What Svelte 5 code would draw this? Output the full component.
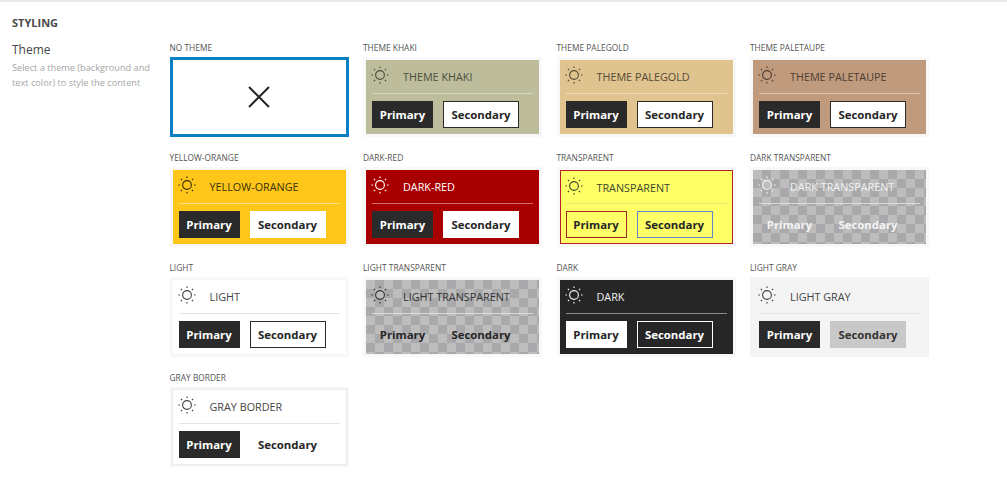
<script>
  const themes = [
    { label: 'THEME KHAKI', cls: 'khaki' },
    { label: 'THEME PALEGOLD', cls: 'palegold' },
    { label: 'THEME PALETAUPE', cls: 'paletaupe' },
    { label: 'YELLOW-ORANGE', cls: 'yellow-orange' },
    { label: 'DARK-RED', cls: 'dark-red' },
    { label: 'TRANSPARENT', cls: 'transparent' },
    { label: 'DARK TRANSPARENT', cls: 'dark-transparent' },
    { label: 'LIGHT', cls: 'light' },
    { label: 'LIGHT TRANSPARENT', cls: 'light-transparent' },
    { label: 'DARK', cls: 'dark' },
    { label: 'LIGHT GRAY', cls: 'light-gray' },
    { label: 'GRAY BORDER', cls: 'gray-border' }
  ];
  const rays = [0, 45, 90, 135, 180, 225, 270, 315];
</script>

<section class="styling">
  <h2>STYLING</h2>
  <div class="field">
    <div class="intro">
      <h3>Theme</h3>
      <p>Select a theme (background and text color) to style the content</p>
    </div>
    <div class="grid">
      <div class="option">
        <span class="label">NO THEME</span>
        <div class="none">
          <svg width="24" height="24" viewBox="0 0 24 24" fill="none" stroke="#262626" stroke-width="2">
            <path d="M2 2 L22 22 M22 2 L2 22" />
          </svg>
        </div>
      </div>
      {#each themes as theme}
        <div class="option">
          <span class="label">{theme.label}</span>
          <div class="frame {theme.cls}">
            <div class="box">
              <div class="head">
                <svg class="sun" width="20" height="20" viewBox="0 0 20 20" fill="none" stroke="currentColor">
                  <circle cx="10" cy="10" r="4.4" stroke-width="1.1" />
                  {#each rays as r}
                    <path d="M10 1.4 V3" stroke-width="1.2" transform="rotate({r} 10 10)" />
                  {/each}
                </svg>
                <span class="name">{theme.label}</span>
              </div>
              <div class="rule"></div>
              <div class="buttons">
                <span class="btn primary">Primary</span>
                <span class="btn secondary">Secondary</span>
              </div>
            </div>
          </div>
        </div>
      {/each}
    </div>
  </div>
</section>

<style>
  :global(body) {
    background: #fff;
  }

  .styling {
    height: 478px;
    box-sizing: border-box;
    border-top: 2px solid #e8e8e8;
    padding: 13px 0 0 12px;
    font-family: "Open Sans", "Noto Sans", sans-serif;
    color: #333;
  }

  h2 {
    margin: 0;
    font-size: 11px;
    line-height: 15px;
    font-weight: 700;
    color: #4a4a4a;
  }

  .field {
    display: flex;
    margin-top: 12px;
  }

  .intro {
    width: 157.5px;
    flex: none;
  }

  h3 {
    margin: -1px 0 0;
    font-size: 12px;
    line-height: 18px;
    font-weight: 400;
    color: #444;
  }

  p {
    margin: 1px 0 0;
    width: 145px;
    font-size: 9.2px;
    line-height: 15px;
    color: #a6a6a6;
  }

  .grid {
    display: grid;
    grid-template-columns: repeat(4, 179px);
    column-gap: 14.5px;
    row-gap: 16px;
    align-content: start;
    padding-top: 1px;
  }

  .option {
    display: flex;
    flex-direction: column;
    width: 179px;
  }

  .label {
    height: 14px;
    font-size: 8.4px;
    line-height: 10px;
    color: #555;
    white-space: nowrap;
  }

  .none {
    box-sizing: border-box;
    height: 80px;
    border: 3px solid #0a80c4;
    display: flex;
    align-items: center;
    justify-content: center;
  }

  .frame {
    box-sizing: border-box;
    height: 80px;
    padding: 3px;
    background: #f8f8f8;
    --bg: #fff;
    --fg: #444;
    --rule: #e4e4e4;
    --primary-bg: #2a2a2a;
    --primary-fg: #fff;
    --primary-line: #2a2a2a;
    --secondary-bg: #fff;
    --secondary-fg: #262626;
    --secondary-line: #2a2a2a;
  }

  .box {
    box-sizing: border-box;
    height: 74px;
    padding: 0 6px;
    background: var(--bg);
    color: var(--fg);
  }

  .head {
    display: flex;
    align-items: center;
    height: 33px;
  }

  .sun {
    flex: none;
    margin-left: -2px;
    margin-top: -3px;
  }

  .name {
    margin-left: 13px;
    font-size: 10.8px;
    white-space: nowrap;
  }

  .rule {
    height: 1px;
    background: var(--rule);
  }

  .buttons {
    display: flex;
    gap: 10px;
    margin-top: 7px;
  }

  .btn {
    box-sizing: border-box;
    height: 27px;
    display: flex;
    align-items: center;
    justify-content: center;
    font-size: 11.4px;
    font-weight: 700;
    border: 1px solid;
  }

  .primary {
    width: 61px;
    background: var(--primary-bg);
    color: var(--primary-fg);
    border-color: var(--primary-line);
  }

  .secondary {
    width: 76px;
    background: var(--secondary-bg);
    color: var(--secondary-fg);
    border-color: var(--secondary-line);
  }

  .khaki { --bg: #bdbd9b; --fg: #4d4d3e; --rule: #d6d6c2; }
  .palegold { --bg: #dfc48f; --fg: #554a35; --rule: #ecdcbc; }
  .paletaupe { --bg: #c09a7d; --fg: #4d3d32; --rule: #d9c2b1; }
  .yellow-orange { --bg: #ffc61a; --fg: #3a2f08; --rule: #ffdf80; --secondary-line: #fff; }
  .dark-red {
    --bg: #a80000;
    --fg: #fff;
    --rule: #cf7070;
    --secondary-line: #fff;
  }
  .transparent {
    --bg: #ffff66;
    --fg: #3c4a2c;
    --rule: #e6e67a;
    --primary-bg: transparent;
    --primary-fg: #262626;
    --primary-line: #9c2a1c;
    --secondary-bg: transparent;
    --secondary-line: #5f87c9;
  }
  .transparent .box {
    border: 1px solid #b3202a;
    padding: 0 5px;
  }
  .transparent .head {
    height: 32px;
  }
  .dark-transparent,
  .light-transparent {
    --primary-bg: transparent;
    --primary-line: transparent;
    --secondary-bg: transparent;
    --secondary-line: transparent;
    --rule: #dcdcdc;
  }
  .dark-transparent { --fg: #f2f2f2; --primary-fg: #f4f4f4; --secondary-fg: #f4f4f4; }
  .light-transparent { --fg: #333; --primary-fg: #262626; --secondary-fg: #262626; }
  .dark-transparent .box,
  .light-transparent .box {
    background: repeating-conic-gradient(#a9a9ab 0 25%, #bdbdbd 0 50%) 0 0 / 18px 18px;
  }
  .dark {
    --bg: #262626;
    --fg: #f2f2f2;
    --rule: #8a8a8a;
    --primary-bg: #fff;
    --primary-fg: #262626;
    --primary-line: #fff;
    --secondary-bg: transparent;
    --secondary-fg: #fff;
    --secondary-line: #fff;
  }
  .light-gray {
    background: #f4f4f4;
    --bg: #f4f4f4;
    --secondary-bg: #c8c8c8;
    --secondary-line: #c8c8c8;
    --secondary-fg: #333;
  }
  .gray-border {
    background: #f6f6f6;
    --secondary-bg: transparent;
    --secondary-line: transparent;
  }
  .gray-border .box {
    box-shadow: 0 0 0 1px #ececec;
  }
</style>
